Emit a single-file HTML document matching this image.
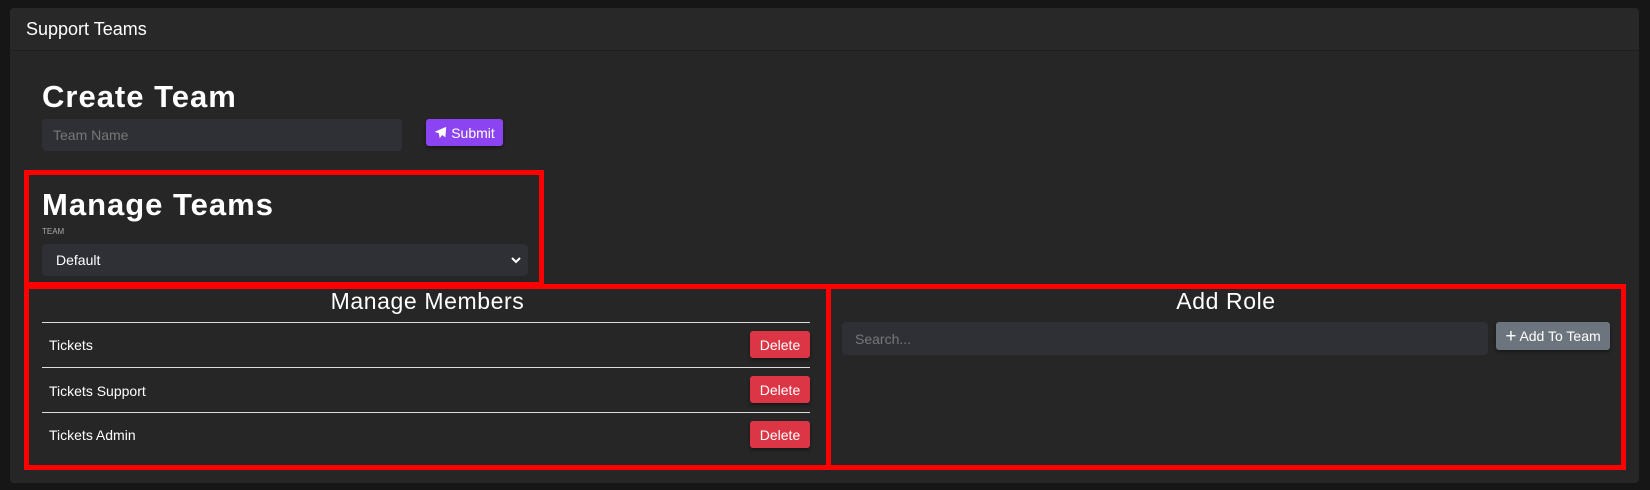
<!DOCTYPE html>
<html><head><meta charset="utf-8"><style>
*{box-sizing:border-box;margin:0;padding:0}
body{width:1650px;height:490px;background:#161616;font-family:"Liberation Sans",sans-serif;color:#fff;position:relative;overflow:hidden}
.card{position:absolute;left:10px;top:8px;width:1629px;height:475px;background:#262626;border-radius:4px}
.hdr{position:absolute;left:0;top:0;right:0;height:43px;border-bottom:1px solid #1e1e1e;background:#282828;border-radius:4px 4px 0 0}
.hdr span{position:absolute;left:16px;top:11px;font-size:18px}
.a{position:absolute}
h1{position:absolute;font-size:31px;font-weight:900;letter-spacing:1px}
.inp{position:absolute;background:#2e3035;border-radius:4px;color:#777;font-size:14px;padding-left:11px;display:flex;align-items:center}
.red{position:absolute;border:5px solid #ff0000}
.btn{position:absolute;border-radius:3px;font-size:14px;display:flex;align-items:center;justify-content:center;color:#fff;box-shadow:0 2px 3px rgba(0,0,0,.4)}
.del{background:#dc3545;left:750px;width:60px;height:27px}
.line{position:absolute;left:42px;width:768px;height:1px;background:#ddd}
.row{position:absolute;left:49px;font-size:14px}
.t{font-size:23px;letter-spacing:0.6px}
</style></head><body>
<div class="card"><div class="hdr"><span>Support Teams</span></div></div>
<h1 style="left:42px;top:79px">Create Team</h1>
<div class="inp" style="left:42px;top:119px;width:360px;height:32px">Team Name</div>
<div class="btn" style="left:426px;top:119px;width:77px;height:27px;background:#8c44f2">
<svg width="13" height="13" viewBox="0 0 16 16" style="margin-right:4px"><path d="M15 1L1 7l5 2 1 6 3-4 4 3z" fill="#fff"/></svg>Submit</div>
<div class="red" style="left:24px;top:170px;width:520px;height:117px"></div>
<h1 style="left:42px;top:187px">Manage Teams</h1>
<div class="a" style="left:42px;top:227px;font-size:8px;color:#aaa">TEAM</div>
<div class="inp" style="left:42px;top:244px;width:486px;height:32px;color:#fff;padding-left:14px">Default
<svg class="a" style="right:7px;top:12px" width="10" height="8" viewBox="0 0 10 8"><path d="M1 2l4 4 4-4" stroke="#fff" stroke-width="2" fill="none"/></svg></div>
<div class="red" style="left:24px;top:284px;width:807px;height:186px"></div>
<div class="red" style="left:826px;top:284px;width:800px;height:186px"></div>
<div class="a t" style="left:29px;width:797px;top:288px;text-align:center">Manage Members</div>
<div class="line" style="top:322px"></div>
<div class="line" style="top:367px"></div>
<div class="line" style="top:412px"></div>
<div class="row" style="top:337px">Tickets</div>
<div class="row" style="top:383px">Tickets Support</div>
<div class="row" style="top:427px">Tickets Admin</div>
<div class="btn del" style="top:331px">Delete</div>
<div class="btn del" style="top:376px">Delete</div>
<div class="btn del" style="top:421px">Delete</div>
<div class="a t" style="left:831px;width:790px;top:288px;text-align:center">Add Role</div>
<div class="inp" style="left:842px;top:322px;width:646px;height:33px;padding-left:13px">Search...</div>
<div class="btn" style="left:1496px;top:322px;width:114px;height:28px;background:#6c757d"><span style="font-size:19px;margin-right:3px;line-height:1">+</span>Add To Team</div>
</body></html>
